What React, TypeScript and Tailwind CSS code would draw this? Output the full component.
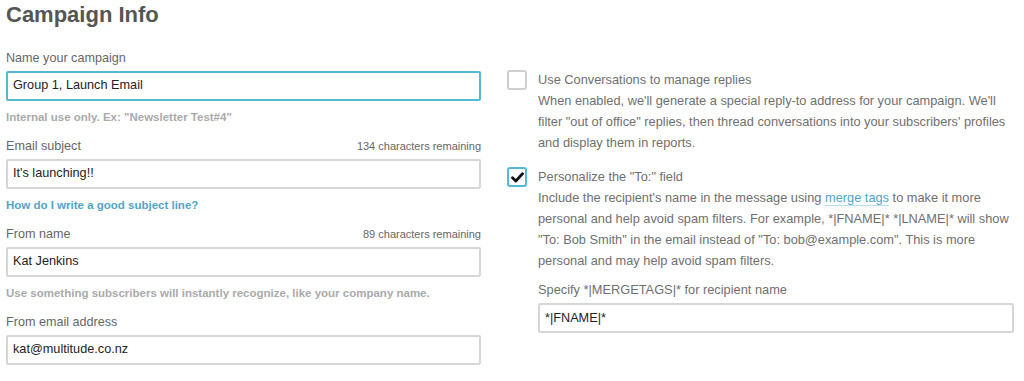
import React from "react";

function Field({
  label,
  counter,
  value,
  focused,
  hint,
  hintLink,
}: {
  label: string;
  counter?: string;
  value: string;
  focused?: boolean;
  hint?: string;
  hintLink?: boolean;
}) {
  return (
    <div className="flex flex-col">
      <div className="flex h-[18px] items-baseline justify-between leading-[18px]">
        <span className="text-[12.6px] text-[#666]">{label}</span>
        {counter && <span className="text-[11px] text-[#666]">{counter}</span>}
      </div>
      <div
        className={
          "mt-[4px] flex h-[30px] items-center rounded-[2px] border-2 px-[5px] text-[12.7px] text-[#222] " +
          (focused ? "border-[#52bad5]" : "border-[#d6d6d6]")
        }
      >
        {value}
      </div>
      {hint && (
        <div
          className={
            "mt-[8px] h-[16px] text-[11.5px] font-bold leading-[16px] " +
            (hintLink ? "text-[#4ea6c8]" : "text-[#aaa]")
          }
        >
          {hint}
        </div>
      )}
    </div>
  );
}

function Checkbox({ checked }: { checked?: boolean }) {
  return (
    <div
      className={
        "flex h-[20px] w-[20px] shrink-0 items-center justify-center rounded-[3px] border-2 bg-white " +
        (checked ? "border-[#52bad5]" : "border-[#d0d0d0]")
      }
    >
      {checked && (
        <svg width="13" height="11" viewBox="0 0 13 11">
          <path d="M1.5 5.8 L4.8 9 L11.5 1.8" fill="none" stroke="#111" strokeWidth="2.8" strokeLinecap="round" strokeLinejoin="round" />
        </svg>
      )}
    </div>
  );
}

function Line({ children }: { children: React.ReactNode }) {
  return <div className="whitespace-nowrap">{children}</div>;
}

export default function App() {
  return (
    <div
      className="h-[381px] w-[1024px] overflow-hidden bg-white pl-[6px] pr-[10px]"
      style={{ fontFamily: '"Liberation Sans", Arial, Helvetica, sans-serif' }}
    >
      <h1 className="h-[30px] text-[22px] font-bold leading-[30px] text-[#555]">Campaign Info</h1>
      <div className="flex gap-[26px]">
        <div className="mt-[19px] flex w-[475px] shrink-0 flex-col gap-[12px]">
          <Field
            label="Name your campaign"
            value="Group 1, Launch Email"
            focused
            hint={'Internal use only. Ex: "Newsletter Test#4"'}
          />
          <Field
            label="Email subject"
            counter="134 characters remaining"
            value="It's launching!!"
            hint="How do I write a good subject line?"
            hintLink
          />
          <Field
            label="From name"
            counter="89 characters remaining"
            value="Kat Jenkins"
            hint="Use something subscribers will instantly recognize, like your company name."
          />
          <Field label="From email address" value="kat@multitude.co.nz" />
        </div>
        <div className="mt-[39px] flex flex-1 flex-col text-[12.8px] leading-[21px] text-[#6f6f6f]">
          <div className="flex gap-[11px]">
            <div className="pt-[1px]">
              <Checkbox />
            </div>
            <div>
              <Line>Use Conversations to manage replies</Line>
              <Line>When enabled, we'll generate a special reply-to address for your campaign. We'll</Line>
              <Line>filter "out of office" replies, then thread conversations into your subscribers' profiles</Line>
              <Line>and display them in reports.</Line>
            </div>
          </div>
          <div className="mt-[13px] flex gap-[11px]">
            <div className="pt-[1px]">
              <Checkbox checked />
            </div>
            <div className="flex-1">
              <Line>Personalize the "To:" field</Line>
              <Line>
                Include the recipient's name in the message using{" "}
                <span className="border-b border-[#b5dfec] text-[#4ea6c8]">merge tags</span> to make it more
              </Line>
              <Line>personal and help avoid spam filters. For example, *|FNAME|* *|LNAME|* will show</Line>
              <Line>"To: Bob Smith" in the email instead of "To: bob@example.com". This is more</Line>
              <Line>personal and may help avoid spam filters.</Line>
              <div className="mt-[8px]">Specify *|MERGETAGS|* for recipient name</div>
              <div className="mt-[3px] flex h-[30px] items-center rounded-[2px] border-2 border-[#d6d6d6] px-[5px] text-[12.7px] text-[#222]">
                *|FNAME|*
              </div>
            </div>
          </div>
        </div>
      </div>
    </div>
  );
}
